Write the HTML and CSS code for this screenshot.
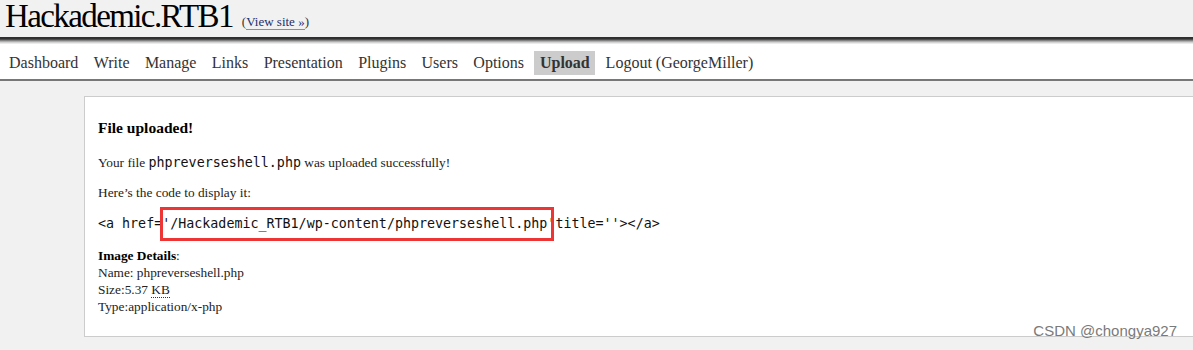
FILE: index.html
```html
<!DOCTYPE html>
<html>
<head>
<meta charset="utf-8">
<title>Hackademic.RTB1 › Upload</title>
<link rel="stylesheet" href="styles.css">
</head>
<body>
<header class="head">
  <h1 class="site-title">Hackademic.RTB1</h1>
  <span class="view-site">(<a href="#">View site »</a>)</span>
</header>
<div class="head-shadow"></div>
<nav class="menu">
  <a href="#">Dashboard</a>
  <a href="#">Write</a>
  <a href="#">Manage</a>
  <a href="#">Links</a>
  <a href="#">Presentation</a>
  <a href="#">Plugins</a>
  <a href="#">Users</a>
  <a href="#">Options</a>
  <a href="#" class="current">Upload</a>
  <a href="#">Logout (GeorgeMiller)</a>
</nav>
<main class="wrap">
  <h2 class="notice-title">File uploaded!</h2>
  <p class="line">Your file <code class="mono">phpreverseshell.php</code> was uploaded successfully!</p>
  <p class="line">Here’s the code to display it:</p>
  <p class="code-line"><code class="mono">&lt;a href=<span class="mark">'/Hackademic_RTB1/wp-content/phpreverseshell.php'</span>title=''&gt;&lt;/a&gt;</code></p>
  <div class="details">
    <div><strong>Image Details</strong>:</div>
    <div>Name: phpreverseshell.php</div>
    <div>Size:5.37 <abbr title="Kilobyte">KB</abbr></div>
    <div>Type:application/x-php</div>
  </div>
</main>
<div class="watermark">CSDN @chongya927</div>
</body>
</html>
```
FILE: styles.css
```css
html, body {
  margin: 0;
  padding: 0;
}
body {
  background: #f1f1f1;
  font-family: "Liberation Serif", "Times New Roman", serif;
  color: #222;
  overflow: hidden;
  position: relative;
  min-height: 350px;
}
.head {
  height: 37px;
  display: flex;
  align-items: flex-start;
  padding-left: 5px;
  box-sizing: border-box;
}
.site-title {
  margin: 0;
  font-weight: normal;
  font-size: 33px;
  line-height: 32px;
  letter-spacing: -1.6px;
  color: #000;
}
.view-site {
  font-size: 13px;
  margin-left: 9px;
  margin-top: 13px;
  line-height: 17px;
  color: #333;
}
.view-site a {
  color: #1a2f6a;
  text-decoration: none;
  border-bottom: 1px solid #6a93d8;
}
.head-shadow {
  height: 7px;
  background: linear-gradient(#2e2e2e 0, #333 2px, #6a6a6a 3px, #999 4px, #c4c4c4 5px, #e2e2e2 6px, #f4f4f4 7px);
}
.menu {
  background: #fff;
  border-bottom: 2px solid #777;
  display: flex;
  gap: 5.4px;
  padding: 7px 4px 4px;
}
.menu a {
  font-size: 16px;
  line-height: 18px;
  padding: 3px 5px;
  color: #333;
  text-decoration: none;
}
.menu a.current {
  background: #ccc;
  font-weight: bold;
  padding: 3px 5.5px;
}
.wrap {
  display: block;
  background: #fff;
  border: 1px solid #ccc;
  border-right: none;
  margin: 15px 0 0 84px;
  padding: 21px 0 21px 13px;
}
.notice-title {
  margin: 0 0 16px;
  font-size: 15.5px;
  line-height: 20px;
  color: #000;
}
.line {
  margin: 0 0 12px;
  font-size: 13.33px;
  line-height: 18px;
}
.mono {
  font-family: "DejaVu Sans Mono", monospace;
  font-size: 13.33px;
  line-height: 18px;
}
.line .mono {
  color: #111;
}
.code-line {
  margin: 13px 0 14px;
  font-size: 13.33px;
  line-height: 18px;
  color: #111;
}
.mark {
  position: relative;
}
.mark::after {
  content: "";
  position: absolute;
  left: -2px;
  right: 1px;
  top: -9px;
  bottom: -10px;
  border: 3px solid #ee3535;
}
.details {
  font-size: 13.33px;
  line-height: 17px;
  color: #222;
}
.details strong {
  color: #000;
}
.details abbr {
  text-decoration: none;
  border-bottom: 1px dotted #333;
}
.watermark {
  position: absolute;
  top: 322px;
  right: 16px;
  font-family: "Liberation Sans", Arial, sans-serif;
  font-size: 15px;
  line-height: 18px;
  color: #7a7a7a;
}
```
